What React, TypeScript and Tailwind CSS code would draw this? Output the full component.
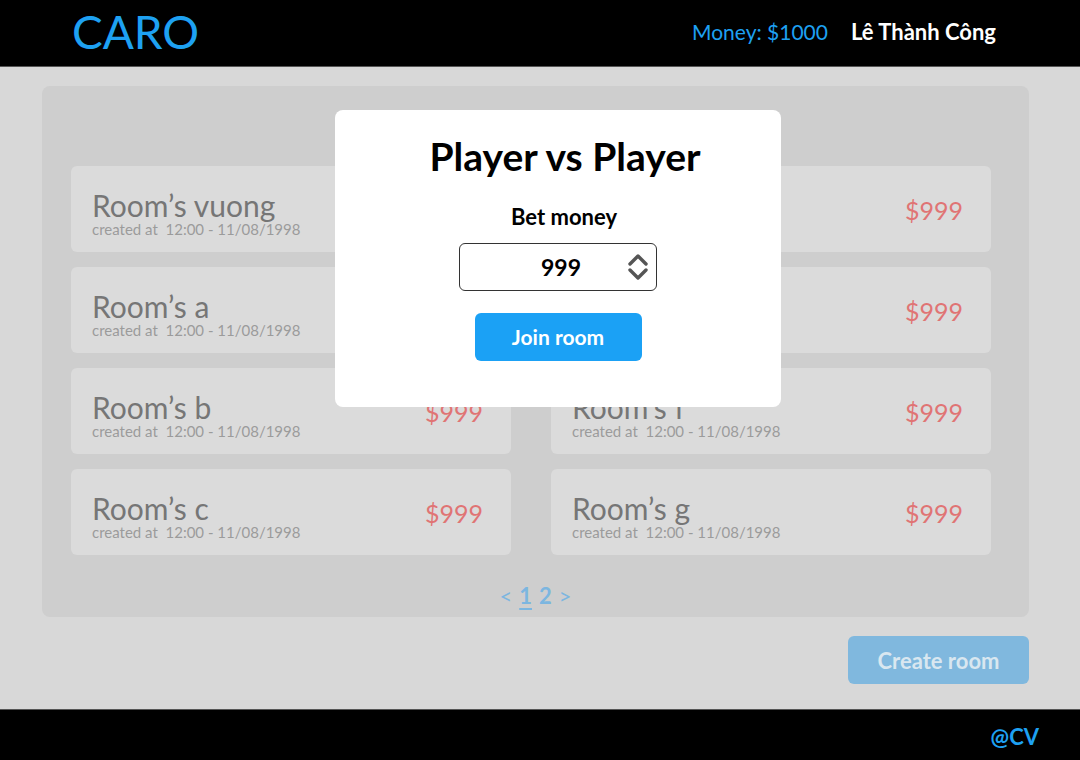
type Room = { name: string; price: string };

const ROOMS: Room[] = [
  { name: "Room’s vuong", price: "$999" },
  { name: "Room’s d", price: "$999" },
  { name: "Room’s a", price: "$999" },
  { name: "Room’s e", price: "$999" },
  { name: "Room’s b", price: "$999" },
  { name: "Room’s f", price: "$999" },
  { name: "Room’s c", price: "$999" },
  { name: "Room’s g", price: "$999" },
];

function RoomCard({ room }: { room: Room }) {
  return (
    <div className="flex h-[86px] items-center justify-between rounded-md bg-[#dbdbdb] pl-[21px] pr-[28px]">
      <div className="mt-[8px] flex flex-col">
        <span className="text-[30px] leading-[32px] text-[#767676]">{room.name}</span>
        <span className="text-[15px] leading-[17px] text-[#9b9b9b]">created at&nbsp; 12:00 - 11/08/1998</span>
      </div>
      <span className="mt-[4px] text-[25px] text-[#e07474]">{room.price}</span>
    </div>
  );
}

// up/down stepper drawn as two heavy chevrons
function Stepper() {
  return (
    <svg width="20" height="28" viewBox="0 0 20 28" fill="none" stroke="#555" strokeWidth="3.4" strokeLinecap="round" strokeLinejoin="round">
      <path d="M2 11 L10 3 L18 11" />
      <path d="M2 17 L10 25 L18 17" />
    </svg>
  );
}

export default function App() {
  return (
    <div className="relative flex h-[760px] w-[1080px] flex-col font-['Lato',sans-serif]">
      {/* header */}
      <header className="flex h-[67px] items-center justify-between border-b border-[#555] bg-black pb-[3px] pl-[72px] pr-[84px]">
        <span className="text-[46px] leading-none text-[#1ea1f2]">CARO</span>
        <div className="flex items-center gap-[23px]">
          <span className="text-[21px] text-[#1ea1f2]">Money: $1000</span>
          <span className="text-[22px] font-bold text-white">Lê Thành Công</span>
        </div>
      </header>

      {/* main */}
      <main className="flex flex-1 flex-col bg-[#d8d8d8] pl-[42px] pt-[19px]">
        <section className="flex h-[531px] w-[987px] flex-col rounded-lg bg-[#cecece] pl-[29px]">
          {/* room list heading sits under the modal */}
          <div className="h-[80px]" />
          <div className="grid grid-cols-[440px_440px] gap-x-[40px] gap-y-[15px]">
            {ROOMS.map((r) => (
              <RoomCard key={r.name} room={r} />
            ))}
          </div>
          <div className="mt-[24px] flex items-center justify-center gap-[7px] pr-[29px] text-[22px] text-[#7cb6e0]">
            <span>&lt;</span>
            <span className="font-bold underline decoration-2 underline-offset-4">1</span>
            <span className="font-bold">2</span>
            <span>&gt;</span>
          </div>
        </section>
        <div className="flex w-[987px] justify-end pt-[19px]">
          <button className="h-[48px] w-[181px] rounded-md bg-[#80b8de] text-[22px] font-bold text-[#d9e7f0]">
            Create room
          </button>
        </div>
      </main>

      {/* footer */}
      <footer className="flex h-[51px] items-center justify-end border-t border-[#555] bg-black pr-[41px]">
        <span className="mt-[2px] text-[22px] font-bold text-[#1ea1f2]">@CV</span>
      </footer>

      {/* modal */}
      <div className="absolute left-[335px] top-[110px] flex h-[297px] w-[446px] flex-col items-center rounded-lg bg-white pt-[24px]">
        <h1 className="pl-[14px] text-[39px] font-bold leading-[44px] text-black">Player vs Player</h1>
        <p className="mt-[27px] pl-[12px] text-[22px] font-bold leading-[24px] text-black">Bet money</p>
        <div className="relative mt-[14px] flex h-[48px] w-[198px] items-center justify-center rounded-md border border-[#333]">
          <span className="pl-[6px] text-[23px] font-bold text-black">999</span>
          <div className="absolute right-[8px] top-[9px] flex">
            <Stepper />
          </div>
        </div>
        <button className="mt-[22px] h-[48px] w-[167px] rounded-md bg-[#1ba1f5] text-[21px] font-bold text-white">
          Join room
        </button>
      </div>
    </div>
  );
}
